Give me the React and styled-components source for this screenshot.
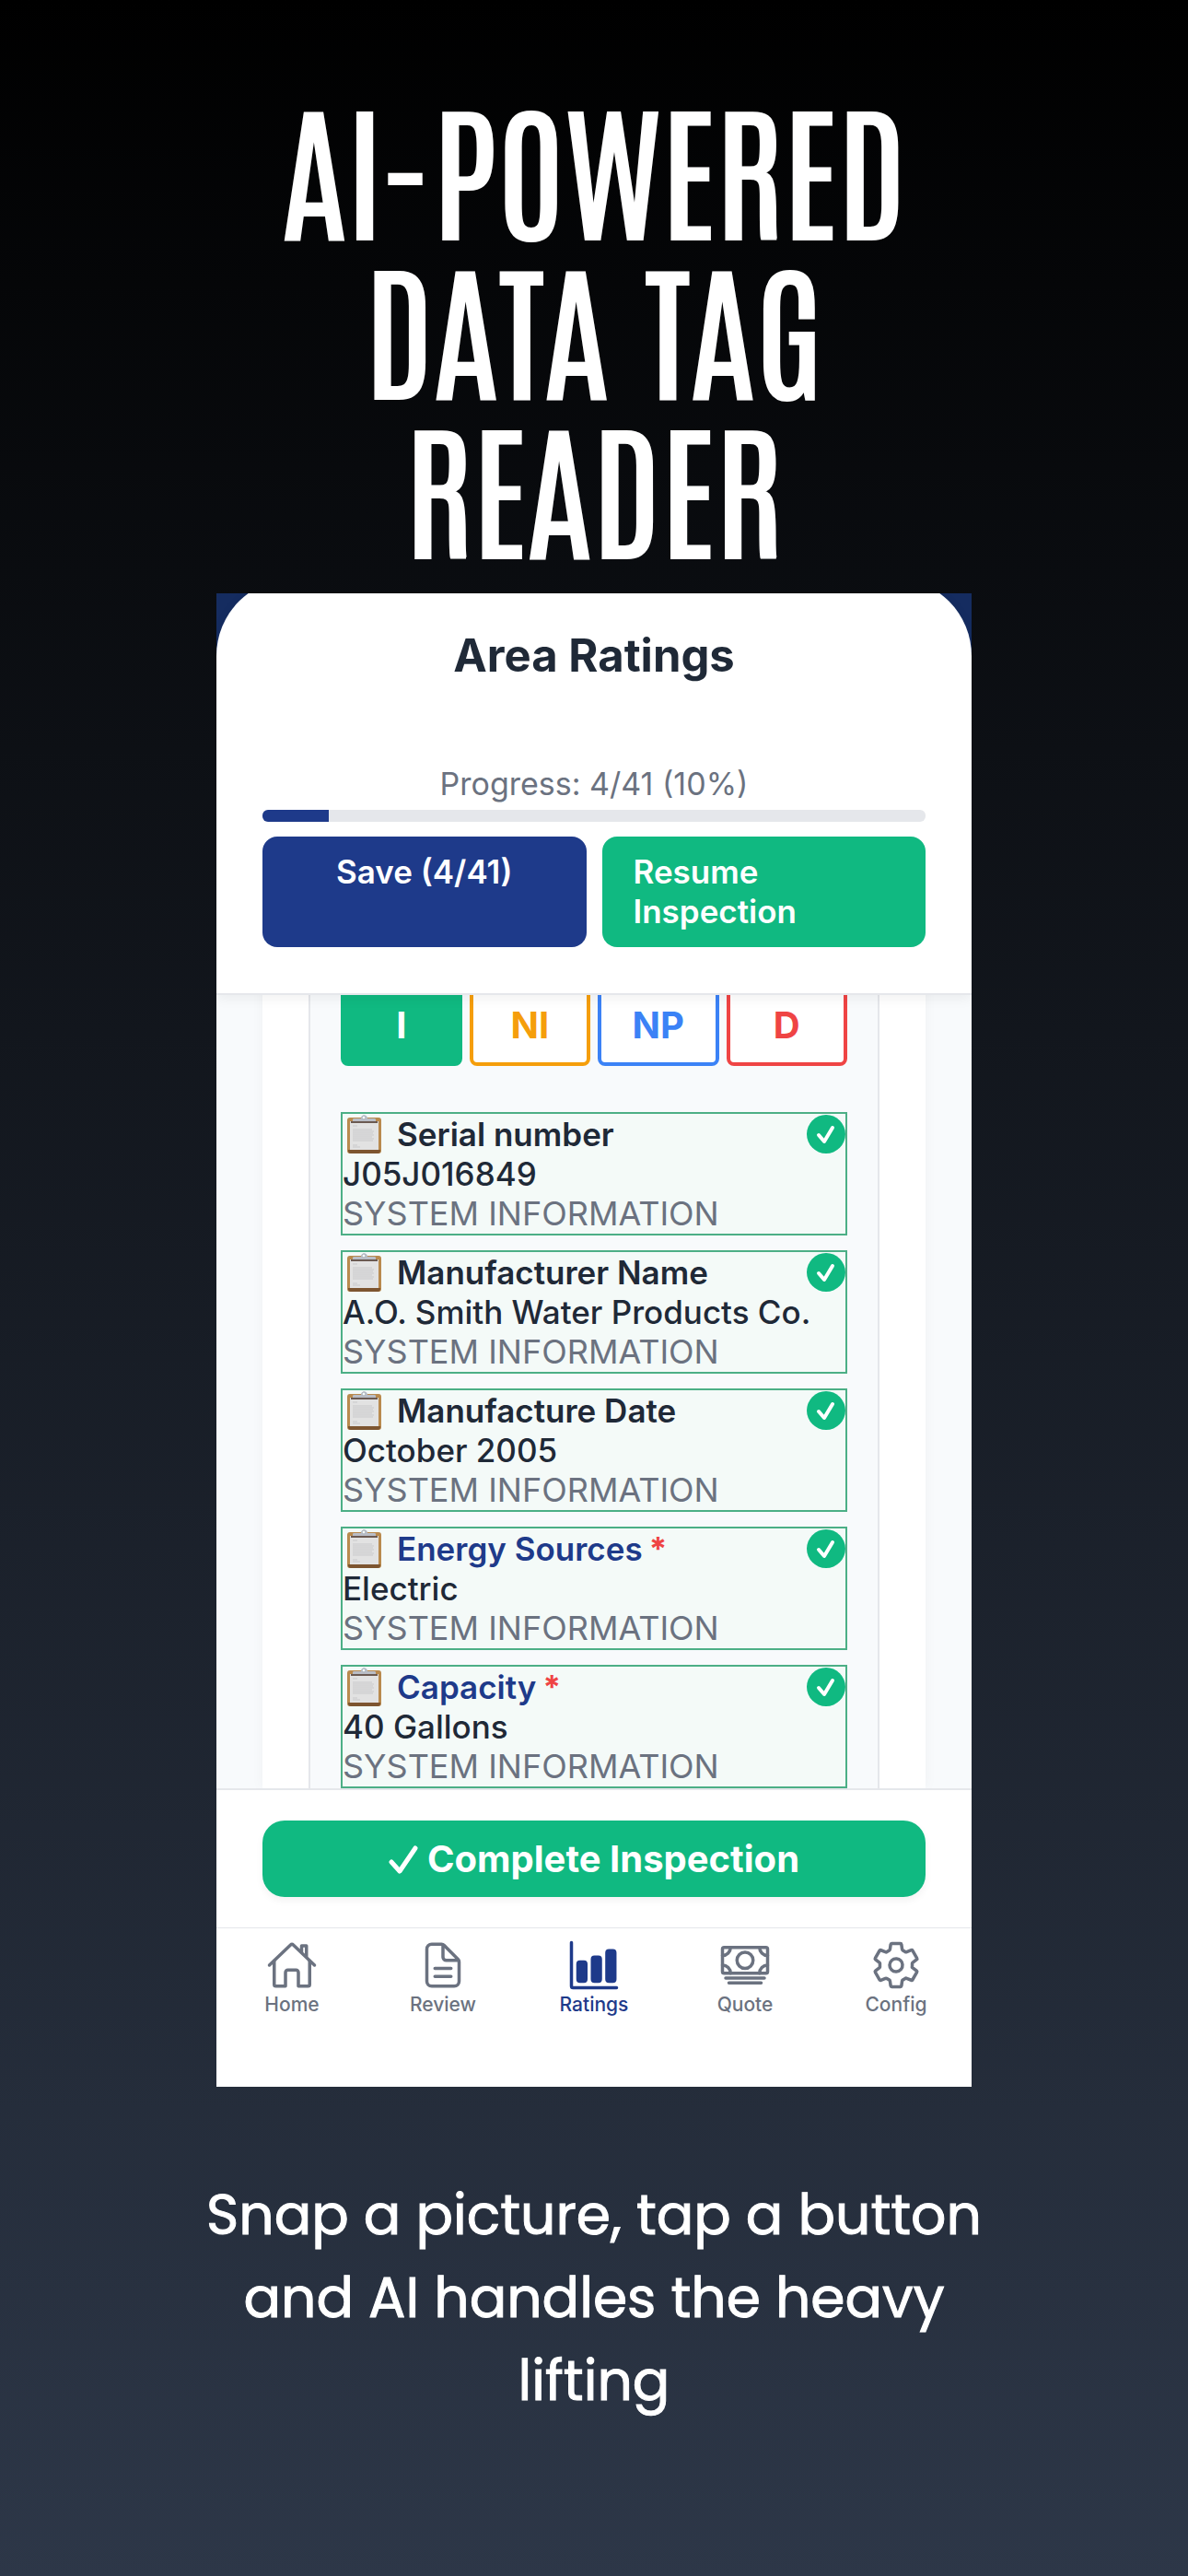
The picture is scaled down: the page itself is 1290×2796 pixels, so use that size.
import styled, { createGlobalStyle } from "styled-components";
import {
  IoHomeOutline,
  IoDocumentTextOutline,
  IoBarChart,
  IoCashOutline,
  IoSettingsOutline,
} from "react-icons/io5";

const GlobalStyle = createGlobalStyle`
  * {
    box-sizing: border-box;
  }

  body {
    margin: 0;
    font-family: Inter, "Liberation Sans", sans-serif;
  }
`;

const Page = styled.main`
  min-height: 100vh;
  padding-top: 92px;
  padding-bottom: 150px;
  background: linear-gradient(180deg, #000000 0%, #2d3748 100%);
  color: #ffffff;
  text-align: center;
`;

const Headline = styled.h1`
  max-width: 720px;
  margin: 0 auto 33px;
  font-family: "Antonio", "Roboto Condensed", "Liberation Sans Narrow", "Liberation Sans", sans-serif;
  font-size: 160px;
  font-weight: 400;
  line-height: 173px;
  text-transform: uppercase;
  -webkit-text-stroke: 2px #ffffff;
`;

const Caption = styled.p`
  max-width: 860px;
  margin: 94px auto 0;
  font-family: Poppins, Inter, sans-serif;
  font-size: 60px;
  font-weight: 400;
  line-height: 90px;
  -webkit-text-stroke: 1px #ffffff;
`;

const Screen = styled.section`
  margin: 0 235px;
  overflow: hidden;
  background-color: #152c60;
  color: #1f2937;
  text-align: left;
`;

const Header = styled.header`
  position: relative;
  margin-top: -16px;
  padding: 54px 50px 50px;
  background-color: #ffffff;
  border-radius: 84px 84px 0 0;
  border-bottom: 2px solid #e5e7eb;
  box-shadow: 0 4px 14px rgba(0, 0, 0, 0.06);
`;

const Title = styled.h2`
  margin: 0 0 87px;
  font-size: 49px;
  font-weight: 700;
  line-height: 60px;
  text-align: center;
`;

const ProgressText = styled.label`
  display: block;
  margin-bottom: 7px;
  font-size: 34px;
  line-height: 43px;
  text-align: center;
  color: #6b7280;
`;

const ProgressBar = styled.progress`
  display: block;
  width: 100%;
  height: 13px;
  margin-bottom: 16px;
  border: none;
  border-radius: 6px;
  overflow: hidden;
  appearance: none;
  background-color: #e5e7eb;

  &::-webkit-progress-bar {
    background-color: #e5e7eb;
  }

  &::-webkit-progress-value {
    background-color: #1e3a8a;
  }
`;

const Actions = styled.div`
  display: grid;
  grid-template-columns: 1fr 1fr;
  gap: 17px;
`;

const ActionButton = styled.button`
  display: flex;
  justify-content: ${(props) => (props.$primary ? "center" : "flex-start")};
  align-items: flex-start;
  padding: 17px 34px;
  border: none;
  border-radius: 16px;
  background-color: ${(props) => (props.$primary ? "#1e3a8a" : "#10b981")};
  color: #ffffff;
  font-family: inherit;
  font-size: 35px;
  font-weight: 600;
  line-height: 43px;
  text-align: left;
`;

const List = styled.div`
  padding: 0 50px;
  overflow: hidden;
  background-color: #f8fafc;
`;

const Card = styled.div`
  padding: 0 50px;
  background-color: #ffffff;
  box-shadow: 0 0 14px rgba(0, 0, 0, 0.04);
`;

const Panel = styled.div`
  padding: 0 33px;
  border: solid #e5e7eb;
  border-width: 0 2px;
  background-color: #f8fafc;
`;

const Ratings = styled.div`
  display: grid;
  grid-template-columns: repeat(4, 1fr);
  gap: 8px;
  margin: -13px 0 50px;
`;

const RatingButton = styled.button`
  height: 90px;
  padding: 0;
  border: 4px solid ${(props) => props.$color};
  border-radius: 8px;
  background-color: ${(props) => (props.$active ? props.$color : "#ffffff")};
  color: ${(props) => (props.$active ? "#ffffff" : props.$color)};
  font-family: inherit;
  font-size: 40px;
  font-weight: 700;
`;

const Fields = styled.div`
  display: flex;
  flex-direction: column;
  gap: 16px;
`;

const Field = styled.article`
  border: 2px solid #4caf86;
  background-color: #f4faf8;
  font-size: 35px;
  line-height: 43px;
`;

const FieldTop = styled.div`
  display: flex;
  align-items: center;
  height: 44px;
  padding-left: 5px;
`;

const FieldName = styled.h3`
  flex-grow: 1;
  margin: 0 0 0 17px;
  font-size: 35px;
  font-weight: 600;
  color: ${(props) => (props.$required ? "#1e3a8a" : "#1f2937")};
`;

const Star = styled.span`
  margin-left: 7px;
  font-weight: 700;
  color: #ef4444;
`;

const FieldValue = styled.div`
  font-weight: 500;
`;

const FieldGroup = styled.div`
  font-size: 36px;
  color: #6b7280;
  text-transform: uppercase;
`;

const Footer = styled.div`
  padding: 33px 50px;
  border-top: 2px solid #e5e7eb;
  background-color: #ffffff;
`;

const CompleteButton = styled.button`
  display: flex;
  align-items: center;
  justify-content: center;
  gap: 10px;
  width: 100%;
  height: 83px;
  border: none;
  border-radius: 24px;
  background-color: #10b981;
  box-shadow: 0 4px 8px rgba(0, 0, 0, 0.05);
  color: #ffffff;
  font-family: inherit;
  font-size: 40px;
  font-weight: 700;
`;

const TabBar = styled.nav`
  display: grid;
  grid-template-columns: repeat(5, 1fr);
  padding: 12px 0 75px;
  border-top: 1px solid #e5e7eb;
  background-color: #ffffff;
`;

const Tab = styled.a`
  display: flex;
  flex-direction: column;
  align-items: center;
  color: ${(props) => (props.$active ? "#1e3a8a" : "#6b7280")};
  font-size: 21px;
  font-weight: 500;
  line-height: 29px;
  text-decoration: none;

  & svg {
    width: 56px;
    height: 56px;
  }
`;

const ratings = [
  { name: "I", color: "#10b981", active: true },
  { name: "NI", color: "#f59e0b" },
  { name: "NP", color: "#3b82f6" },
  { name: "D", color: "#ef4444" },
];

const fields = [
  { name: "Serial number", value: "J05J016849" },
  { name: "Manufacturer Name", value: "A.O. Smith Water Products Co." },
  { name: "Manufacture Date", value: "October 2005" },
  { name: "Energy Sources", value: "Electric", required: true },
  { name: "Capacity", value: "40 Gallons", required: true },
];

const tabs = [
  { name: "Home", Icon: IoHomeOutline },
  { name: "Review", Icon: IoDocumentTextOutline },
  { name: "Ratings", Icon: IoBarChart, active: true },
  { name: "Quote", Icon: IoCashOutline },
  { name: "Config", Icon: IoSettingsOutline },
];

function Clipboard() {
  return (
    <svg width="37" height="42" viewBox="0 0 37 42" aria-hidden="true">
      <rect x="0" y="3" width="37" height="39" rx="3" fill="#b98a4e" />
      <path d="M1 38h35v1a3 3 0 0 1-3 3H4a3 3 0 0 1-3-3z" fill="#7d5530" />
      <rect x="3" y="7" width="31" height="31" fill="#e2e2e2" />
      <path d="M6 12h5M6 16h21M6 18h23M6 20h22M6 22h23M6 24h21M6 26h23M6 28h22M6 33h5M6 35h8" stroke="#c9c9cb" strokeWidth="1" />
      <path d="M4 7h29v2H4z" fill="#6b5a52" />
      <path d="M6 7V5c0-1 1-1 2-1h7c0-5 7-5 7 0h7c1 0 2 0 2 1v2z" fill="#b9bdc6" />
      <circle cx="18" cy="3" r="2" fill="#f4faf8" stroke="#a9b0bb" strokeWidth="1" />
    </svg>
  );
}

function DoneBadge() {
  return (
    <svg width="42" height="42" viewBox="0 0 42 42" role="img" aria-label="Done">
      <circle cx="21" cy="21" r="21" fill="#10b981" />
      <path d="M13 22l6 7L28 14" fill="none" stroke="#ffffff" strokeWidth="4" strokeLinecap="round" strokeLinejoin="round" />
    </svg>
  );
}

function CheckMark() {
  return (
    <svg width="32" height="32" viewBox="0 0 32 32" aria-hidden="true">
      <path d="M3 19l9 10L29 4" fill="none" stroke="#ffffff" strokeWidth="5" strokeLinecap="round" strokeLinejoin="round" />
    </svg>
  );
}

export default function App() {
  return (
    <Page>
      <GlobalStyle />
      <Headline>
        AI-Powered
        <br />
        Data Tag
        <br />
        Reader
      </Headline>
      <Screen>
        <Header>
          <Title>Area Ratings</Title>
          <ProgressText htmlFor="progress">Progress: 4/41 (10%)</ProgressText>
          <ProgressBar id="progress" value="10" max="100" />
          <Actions>
            <ActionButton $primary>Save (4/41)</ActionButton>
            <ActionButton>
              Resume
              <br />
              Inspection
            </ActionButton>
          </Actions>
        </Header>
        <List>
          <Card>
            <Panel>
              <Ratings>
                {ratings.map((r) => (
                  <RatingButton key={r.name} $color={r.color} $active={r.active}>
                    {r.name}
                  </RatingButton>
                ))}
              </Ratings>
              <Fields>
                {fields.map((f) => (
                  <Field key={f.name}>
                    <FieldTop>
                      <Clipboard />
                      <FieldName $required={f.required}>
                        {f.name}
                        {f.required && <Star>*</Star>}
                      </FieldName>
                      <DoneBadge />
                    </FieldTop>
                    <FieldValue>{f.value}</FieldValue>
                    <FieldGroup>System Information</FieldGroup>
                  </Field>
                ))}
              </Fields>
            </Panel>
          </Card>
        </List>
        <Footer>
          <CompleteButton>
            <CheckMark />
            Complete Inspection
          </CompleteButton>
        </Footer>
        <TabBar>
          {tabs.map(({ name, Icon, active }) => (
            <Tab key={name} href="#" $active={active}>
              <Icon />
              {name}
            </Tab>
          ))}
        </TabBar>
      </Screen>
      <Caption>Snap a picture, tap a button and AI handles the heavy lifting</Caption>
    </Page>
  );
}
